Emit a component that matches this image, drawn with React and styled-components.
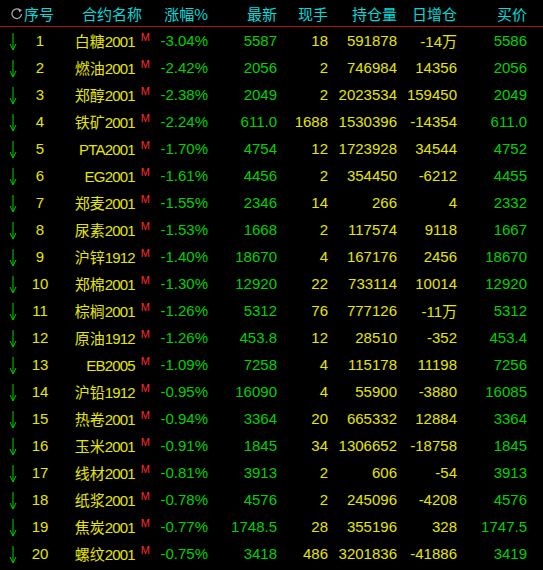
import styled, { createGlobalStyle } from "styled-components";

const COLS = "26px 28px 98px 56px 69px 51px 69px 60px 70px 1fr";
const YELLOW = "#e6e600";
const GREEN = "#00d200";
const CYAN = "#00dcdc";

const rows = [
  ["白糖", "2001", "-3.04%", "5587", "18", "591878", "-14万", "5586"],
  ["燃油", "2001", "-2.42%", "2056", "2", "746984", "14356", "2056"],
  ["郑醇", "2001", "-2.38%", "2049", "2", "2023534", "159450", "2049"],
  ["铁矿", "2001", "-2.24%", "611.0", "1688", "1530396", "-14354", "611.0"],
  ["", "PTA2001", "-1.70%", "4754", "12", "1723928", "34544", "4752"],
  ["", "EG2001", "-1.61%", "4456", "2", "354450", "-6212", "4455"],
  ["郑麦", "2001", "-1.55%", "2346", "14", "266", "4", "2332"],
  ["尿素", "2001", "-1.53%", "1668", "2", "117574", "9118", "1667"],
  ["沪锌", "1912", "-1.40%", "18670", "4", "167176", "2456", "18670"],
  ["郑棉", "2001", "-1.30%", "12920", "22", "733114", "10014", "12920"],
  ["棕榈", "2001", "-1.26%", "5312", "76", "777126", "-11万", "5312"],
  ["原油", "1912", "-1.26%", "453.8", "12", "28510", "-352", "453.4"],
  ["", "EB2005", "-1.09%", "7258", "4", "115178", "11198", "7256"],
  ["沪铅", "1912", "-0.95%", "16090", "4", "55900", "-3880", "16085"],
  ["热卷", "2001", "-0.94%", "3364", "20", "665332", "12884", "3364"],
  ["玉米", "2001", "-0.91%", "1845", "34", "1306652", "-18758", "1845"],
  ["线材", "2001", "-0.81%", "3913", "2", "606", "-54", "3913"],
  ["纸浆", "2001", "-0.78%", "4576", "2", "245096", "-4208", "4576"],
  ["焦炭", "2001", "-0.77%", "1748.5", "28", "355196", "328", "1747.5"],
  ["螺纹", "2001", "-0.75%", "3418", "486", "3201836", "-41886", "3419"],
];

const GlobalStyle = createGlobalStyle`
  html, body {
    margin: 0;
    padding: 0;
    background: #000;
  }
  body {
    font-family: "Liberation Sans", "Noto Sans CJK SC", sans-serif;
  }
`;

const Board = styled.div`
  width: 543px;
  height: 570px;
  background: #000;
  overflow: hidden;
`;

const HeaderRow = styled.div`
  display: grid;
  grid-template-columns: ${COLS};
  height: 26px;
  align-items: center;
  border-bottom: 1px solid #b01414;
  color: ${CYAN};
  font-size: 15px;
  font-family: "Noto Sans CJK SC", "Liberation Sans", sans-serif;
`;

const HeadFirst = styled.div`
  grid-column: 1 / 3;
  display: flex;
  align-items: center;
  gap: 1px;
  padding-left: 11px;
  white-space: nowrap;
`;

const HeadCell = styled.div`
  text-align: right;
  white-space: nowrap;
  padding-right: ${(p) => p.$pr || 0}px;
`;

const Row = styled.div`
  display: grid;
  grid-template-columns: ${COLS};
  height: 27px;
  align-items: center;
  font-size: 15px;
`;

const ArrowCell = styled.div`
  display: flex;
  justify-content: center;
  padding-top: 2px;
`;

const SeqCell = styled.div`
  text-align: center;
  color: ${YELLOW};
`;

const NameCell = styled.div`
  text-align: right;
  padding-right: 2px;
  color: ${YELLOW};
  white-space: nowrap;
`;

const Cn = styled.span`
  font-family: "Noto Sans CJK SC", sans-serif;
  font-size: 15px;
`;

const Code = styled.span`
  font-family: "Liberation Sans", sans-serif;
  font-size: 15px;
  letter-spacing: -0.8px;
`;

const Mark = styled.span`
  color: #ff2a2a;
  font-size: 11px;
  margin-left: 6px;
  vertical-align: 6px;
`;

const Num = styled.div`
  text-align: right;
  white-space: nowrap;
  color: ${(p) => (p.$green ? GREEN : YELLOW)};
`;

const Wan = styled.span`
  font-family: "Noto Sans CJK SC", sans-serif;
`;

const RefreshIcon = () => (
  <svg width="15" height="15" viewBox="0 0 15 15">
    <path
      d="M13.2 8 A6 6 0 1 1 10.8 3"
      fill="none"
      stroke="#a8a8a8"
      strokeWidth="1.6"
    />
    <path d="M9 1 L13.8 3 L10.2 6.4 Z" fill="#a8a8a8" />
  </svg>
);

const DownArrow = () => (
  <svg width="8" height="18" viewBox="0 0 8 18">
    <line x1="4" y1="0" x2="4" y2="16" stroke={GREEN} strokeWidth="1" />
    <path d="M1 11 L4 17 L7 11" fill="none" stroke={GREEN} strokeWidth="1" />
  </svg>
);

const renderChange = (v) =>
  v.endsWith("万") ? (
    <>
      {v.slice(0, -1)}
      <Wan>万</Wan>
    </>
  ) : (
    v
  );

const App = () => (
  <Board>
    <GlobalStyle />
    <HeaderRow>
      <HeadFirst>
        <RefreshIcon />
        <span>序号</span>
      </HeadFirst>
      <HeadCell $pr={10}>合约名称</HeadCell>
      <HeadCell>涨幅%</HeadCell>
      <HeadCell>最新</HeadCell>
      <HeadCell>现手</HeadCell>
      <HeadCell>持仓量</HeadCell>
      <HeadCell>日增仓</HeadCell>
      <HeadCell>买价</HeadCell>
    </HeaderRow>
    {rows.map((r, i) => (
      <Row key={i}>
        <ArrowCell>
          <DownArrow />
        </ArrowCell>
        <SeqCell>{i + 1}</SeqCell>
        <NameCell>
          {r[0] && <Cn>{r[0]}</Cn>}
          <Code>{r[1]}</Code>
          <Mark>M</Mark>
        </NameCell>
        <Num $green>{r[2]}</Num>
        <Num $green>{r[3]}</Num>
        <Num>{r[4]}</Num>
        <Num>{r[5]}</Num>
        <Num>{renderChange(r[6])}</Num>
        <Num $green>{r[7]}</Num>
      </Row>
    ))}
  </Board>
);

export default App;
